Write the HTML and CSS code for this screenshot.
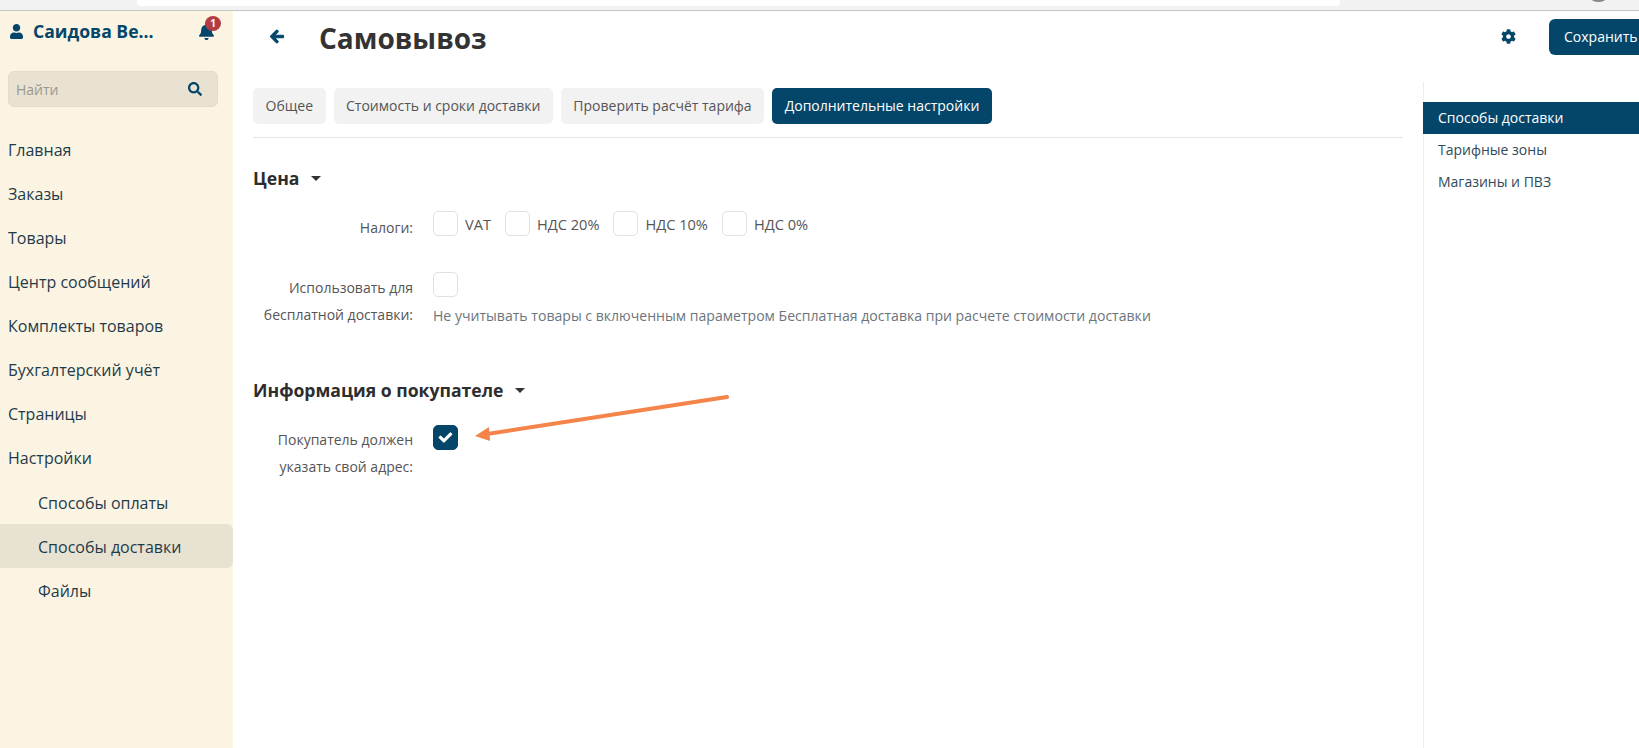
FILE: index.html
```html
<!DOCTYPE html>
<html lang="ru">
<head>
<meta charset="utf-8">
<title>Самовывоз</title>
<link rel="stylesheet" href="styles.css">
</head>
<body>
<div class="chrome"><div class="chrome-input"></div><div class="chrome-avatar"></div></div>
<div class="app">
  <aside class="sidebar">
    <div class="user">
      <svg class="user-icon" viewBox="0 0 448 512"><path fill="currentColor" d="M224 256c70.700 0 128-57.300 128-128S294.700 0 224 0 96 57.300 96 128s57.300 128 128 128zm89.600 32h-16.700c-22.200 10.200-46.900 16-72.900 16s-50.600-5.800-72.900-16h-16.700C60.200 288 0 348.200 0 422.400V464c0 26.500 21.500 48 48 48h352c26.500 0 48-21.500 48-48v-41.600c0-74.200-60.200-134.400-134.400-134.400z"/></svg>
      <span class="user-name">Саидова Ве...</span>
      <span class="bell">
        <svg class="bell-icon" viewBox="0 0 448 512"><path fill="currentColor" d="M224 512c35.320 0 63.970-28.650 63.970-64H160.030c0 35.350 28.650 64 63.970 64zm215.390-149.710c-19.320-20.760-55.470-51.990-55.470-154.290 0-77.700-54.480-139.900-127.940-155.160V32c0-17.670-14.320-32-31.980-32s-31.980 14.330-31.980 32v20.840C118.560 68.100 64.080 130.300 64.080 208c0 102.300-36.150 133.530-55.470 154.290-6 6.450-8.660 14.160-8.610 21.710.11 16.400 12.980 32 32.100 32h383.800c19.120 0 32-15.600 32.100-32 .05-7.550-2.610-15.270-8.610-21.710z"/></svg>
        <span class="badge">1</span>
      </span>
    </div>
    <div class="search">
      <span class="search-text">Найти</span>
      <svg class="search-icon" viewBox="0 0 512 512"><path fill="currentColor" d="M505 442.700L405.300 343c-4.500-4.500-10.600-7-17-7H372c27.600-35.300 44-79.700 44-128C416 93.100 322.900 0 208 0S0 93.100 0 208s93.100 208 208 208c48.300 0 92.700-16.400 128-44v16.300c0 6.400 2.500 12.500 7 17l99.700 99.700c9.400 9.400 24.600 9.400 33.900 0l28.300-28.300c9.400-9.400 9.400-24.600.1-34zM208 336c-70.700 0-128-57.200-128-128 0-70.700 57.200-128 128-128 70.700 0 128 57.200 128 128 0 70.700-57.200 128-128 128z"/></svg>
    </div>
    <nav class="menu">
      <a class="menu-item">Главная</a>
      <a class="menu-item">Заказы</a>
      <a class="menu-item">Товары</a>
      <a class="menu-item">Центр сообщений</a>
      <a class="menu-item">Комплекты товаров</a>
      <a class="menu-item">Бухгалтерский учёт</a>
      <a class="menu-item">Страницы</a>
      <a class="menu-item">Настройки</a>
      <a class="menu-item sub">Способы оплаты</a>
      <a class="menu-item sub active">Способы доставки</a>
      <a class="menu-item sub">Файлы</a>
    </nav>
  </aside>
  <div class="page">
    <header class="page-head">
      <svg class="back" viewBox="0 0 448 512"><path class="thick" d="M257.500 445.100l-22.200 22.200c-9.400 9.400-24.600 9.400-33.900 0L7 273c-9.400-9.400-9.400-24.600 0-33.900L201.400 44.700c9.400-9.400 24.600-9.400 33.900 0l22.200 22.200c9.500 9.500 9.300 25-.4 34.300L136.600 216H424c13.300 0 24 10.700 24 24v32c0 13.300-10.700 24-24 24H136.600l120.500 114.800c9.800 9.300 10 24.800.4 34.300z"/></svg>
      <h1 class="title">Самовывоз</h1>
      <svg class="gear" viewBox="0 0 512 512"><path fill="currentColor" d="M487.400 315.700l-42.600-24.600c4.300-23.200 4.300-47 0-70.200l42.600-24.600c4.900-2.800 7.100-8.600 5.500-14-11.100-35.600-30-67.800-54.700-94.600-3.800-4.100-10-5.100-14.800-2.300L380.800 110c-17.900-15.400-38.500-27.300-60.800-35.100V25.800c0-5.600-3.900-10.500-9.400-11.700-36.700-8.200-74.300-7.800-109.200 0-5.500 1.200-9.400 6.100-9.400 11.700V75c-22.200 7.900-42.800 19.800-60.800 35.100L88.700 85.500c-4.900-2.800-11-1.900-14.800 2.300-24.700 26.700-43.600 58.900-54.700 94.600-1.700 5.400.6 11.200 5.500 14L67.300 221c-4.300 23.200-4.300 47 0 70.200l-42.600 24.600c-4.900 2.800-7.100 8.600-5.500 14 11.100 35.600 30 67.800 54.700 94.600 3.800 4.100 10 5.100 14.800 2.300l42.600-24.600c17.900 15.400 38.500 27.300 60.800 35.100v49.200c0 5.600 3.900 10.500 9.400 11.700 36.700 8.200 74.300 7.800 109.200 0 5.500-1.200 9.400-6.100 9.400-11.700v-49.200c22.200-7.900 42.800-19.800 60.800-35.100l42.600 24.600c4.900 2.800 11 1.900 14.800-2.300 24.700-26.700 43.600-58.900 54.700-94.600 1.500-5.500-.7-11.300-5.600-14.100zM256 336c-44.100 0-80-35.900-80-80s35.900-80 80-80 80 35.900 80 80-35.900 80-80 80z"/></svg>
      <button class="save">Сохранить</button>
    </header>
    <div class="page-body">
      <main class="content">
        <div class="tabs">
          <a class="tab">Общее</a>
          <a class="tab">Стоимость и сроки доставки</a>
          <a class="tab">Проверить расчёт тарифа</a>
          <a class="tab on">Дополнительные настройки</a>
        </div>
        <h2 class="section-title first">Цена <span class="caret"></span></h2>
        <div class="row row-tax">
          <div class="label">Налоги:</div>
          <div class="options">
            <span class="box"></span><span class="opt-text">VAT</span>
            <span class="box"></span><span class="opt-text">НДС 20%</span>
            <span class="box"></span><span class="opt-text">НДС 10%</span>
            <span class="box"></span><span class="opt-text">НДС 0%</span>
          </div>
        </div>
        <div class="row row-free">
          <div class="label">Использовать для<br>бесплатной доставки:</div>
          <div class="field">
            <span class="box"></span>
            <p class="hint">Не учитывать товары с включенным параметром Бесплатная доставка при расчете стоимости доставки</p>
          </div>
        </div>
        <h2 class="section-title second">Информация о покупателе <span class="caret"></span></h2>
        <div class="row row-address">
          <div class="label">Покупатель должен<br>указать свой адрес:</div>
          <div class="field">
            <span class="box checked">
              <svg viewBox="0 0 512 512"><path class="thick-white" d="M173.898 439.404l-166.400-166.400c-9.997-9.997-9.997-26.206 0-36.204l36.203-36.204c9.997-9.998 26.207-9.998 36.204 0L192 312.690 432.095 72.596c9.997-9.997 26.207-9.997 36.204 0l36.203 36.204c9.997 9.997 9.997 26.206 0 36.204l-294.400 294.401c-9.998 9.997-26.207 9.997-36.204-.001z"/></svg>
            </span>
          </div>
        </div>
      </main>
      <aside class="side-nav">
        <a class="side-item on">Способы доставки</a>
        <a class="side-item">Тарифные зоны</a>
        <a class="side-item">Магазины и ПВЗ</a>
      </aside>
    </div>
  </div>
</div>
<svg class="arrow" viewBox="0 0 270 60" width="270" height="60">
  <path d="M254 3 14 40" stroke="#f5844a" stroke-width="4" fill="none" stroke-linecap="round"/>
  <path d="M2 42 16 33 17 47z" fill="#f5844a"/>
</svg>
</body>
</html>
```
FILE: styles.css
```css
* { box-sizing: border-box; }
html, body { margin: 0; height: 100%; }
body {
  font-family: "Open Sans", "Noto Sans", sans-serif;
  color: #333;
  background: #fff;
  overflow: hidden;
  display: flex;
  flex-direction: column;
  position: relative;
}
.chrome {
  height: 11px;
  flex: none;
  background: #f2f2f2;
  border-bottom: 1px solid #c4c4c4;
  position: relative;
}
.chrome-input {
  position: absolute;
  left: 137px;
  top: 0;
  width: 1203px;
  height: 6px;
  background: #fff;
  border-radius: 0 0 4px 4px;
}
.chrome-avatar {
  position: absolute;
  left: 1590px;
  top: -9px;
  width: 17px;
  height: 11px;
  border-radius: 50%;
  background: #8a8a8a;
}
.app { flex: 1; display: flex; min-height: 0; }
.sidebar {
  width: 233px;
  flex: none;
  background: #fbf4e3;
  color: #1c3a4a;
}
.user {
  display: flex;
  align-items: center;
  height: 40px;
  padding: 0 18px 0 10px;
}
.user-icon { width: 13px; height: 15px; color: #04466a; flex: none; }
.user-name {
  margin-left: 10px;
  font-size: 17.6px;
  font-weight: 700;
  color: #04466a;
  white-space: nowrap;
}
.bell { margin-left: auto; position: relative; width: 16px; height: 17px; }
.bell-icon { width: 15px; height: 17px; color: #04466a; display: block; }
.badge {
  position: absolute;
  left: 6px;
  top: -7px;
  width: 16px;
  height: 15px;
  border-radius: 50%;
  background: #b23c42;
  color: #fff;
  font-size: 10px;
  font-weight: 700;
  line-height: 15px;
  text-align: center;
}
.search {
  margin: 20px 15px 0 8px;
  height: 36px;
  background: #e9e2d2;
  border: 1px solid #e2dccb;
  border-radius: 6px;
  display: flex;
  align-items: center;
  justify-content: space-between;
  padding: 0 15px 0 7px;
}
.search-text { font-size: 14px; color: #9b978c; }
.search-icon { width: 14px; height: 14px; color: #04466a; }
.menu { margin-top: 21px; display: flex; flex-direction: column; }
.menu-item {
  height: 44px;
  line-height: 44px;
  padding-left: 8px;
  font-size: 16px;
  color: #1f3b4a;
}
.menu-item.sub { padding: 1px 0 0 38px; }
.menu-item.active { background: #e8e2d2; border-radius: 0 6px 6px 0; }
.page { flex: 1; min-width: 0; display: flex; flex-direction: column; }
.page-head {
  height: 69px;
  flex: none;
  display: flex;
  align-items: center;
  padding: 0 0 18px 37px;
}
.back { width: 14px; height: 15px; color: #04466a; overflow: visible; }
.thick { fill: currentColor; stroke: currentColor; stroke-width: 36; stroke-linejoin: round; }
.thick-white { fill: #fff; stroke: #fff; stroke-width: 30; stroke-linejoin: round; }
.title {
  margin: 2px 0 0 35px;
  font-size: 28px;
  font-weight: 700;
  color: #333;
  line-height: 1;
}
.gear { margin-left: auto; width: 15px; height: 15px; color: #04466a; }
.save {
  margin-left: 33px;
  margin-right: -10px;
  width: 100px;
  height: 36px;
  background: #04466a;
  color: #fff;
  border: 0;
  border-radius: 6px 0 0 6px;
  font: 14px "Open Sans", sans-serif;
  text-align: left;
  padding-left: 15px;
}
.page-body { flex: 1; display: flex; min-height: 0; }
.content { flex: 1; min-width: 0; padding: 8px 20px 0 20px; }
.tabs {
  display: flex;
  gap: 8px;
  padding-bottom: 13px;
  border-bottom: 1px solid #e6e6e6;
}
.tab {
  height: 36px;
  line-height: 36px;
  padding: 0 12.5px;
  font-size: 14px;
  color: #555;
  background: #f2f2f2;
  border-radius: 5px;
  white-space: nowrap;
}
.tab.on { background: #04466a; color: #fff; }
.section-title {
  margin: 0;
  font-size: 17.6px;
  font-weight: 700;
  color: #2d2d2d;
  line-height: 22px;
  display: flex;
  align-items: center;
  gap: 12px;
}
.section-title.first { margin-top: 29px; }
.section-title.second { margin-top: 51px; }
.caret {
  width: 0;
  height: 0;
  border-left: 5px solid transparent;
  border-right: 5px solid transparent;
  border-top: 5px solid #333;
}
.row { display: flex; }
.row-tax { margin-top: 22px; }
.row-free { margin-top: 31px; }
.row-address { margin-top: 24px; }
.label {
  width: 160px;
  flex: none;
  text-align: right;
  font-size: 14px;
  line-height: 27px;
  color: #555;
}
.row-tax .label { padding-top: 3px; }
.row-free .label { padding-top: 2px; }
.row-address .label { padding-top: 1px; }
.field, .options { margin-left: 20px; }
.options { display: flex; align-items: center; height: 25px; }
.box {
  display: block;
  flex: none;
  width: 25px;
  height: 25px;
  border: 1px solid #e1e1e1;
  border-radius: 5px;
  background: #fff;
}
.box.checked {
  background: #04466a;
  border-color: #04466a;
  display: flex;
  align-items: center;
  justify-content: center;
}
.box.checked svg { width: 13px; height: 13px; overflow: visible; }
.opt-text { font-size: 14.6px; color: #555; margin: 0 14px 0 7px; }
.hint { margin: 9px 0 0; font-size: 14.07px; line-height: 20px; color: #6c757d; white-space: nowrap; }
.side-nav {
  width: 216px;
  flex: none;
  border-left: 1px solid #eee;
  margin-top: 2px;
  padding-top: 20px;
}
.side-item {
  display: block;
  height: 32px;
  line-height: 32px;
  margin-left: -1px;
  padding-left: 15px;
  font-size: 14px;
  color: #2f4a5a;
}
.side-item.on { background: #04466a; color: #fff; }
.arrow { position: absolute; left: 473px; top: 394px; }
```
